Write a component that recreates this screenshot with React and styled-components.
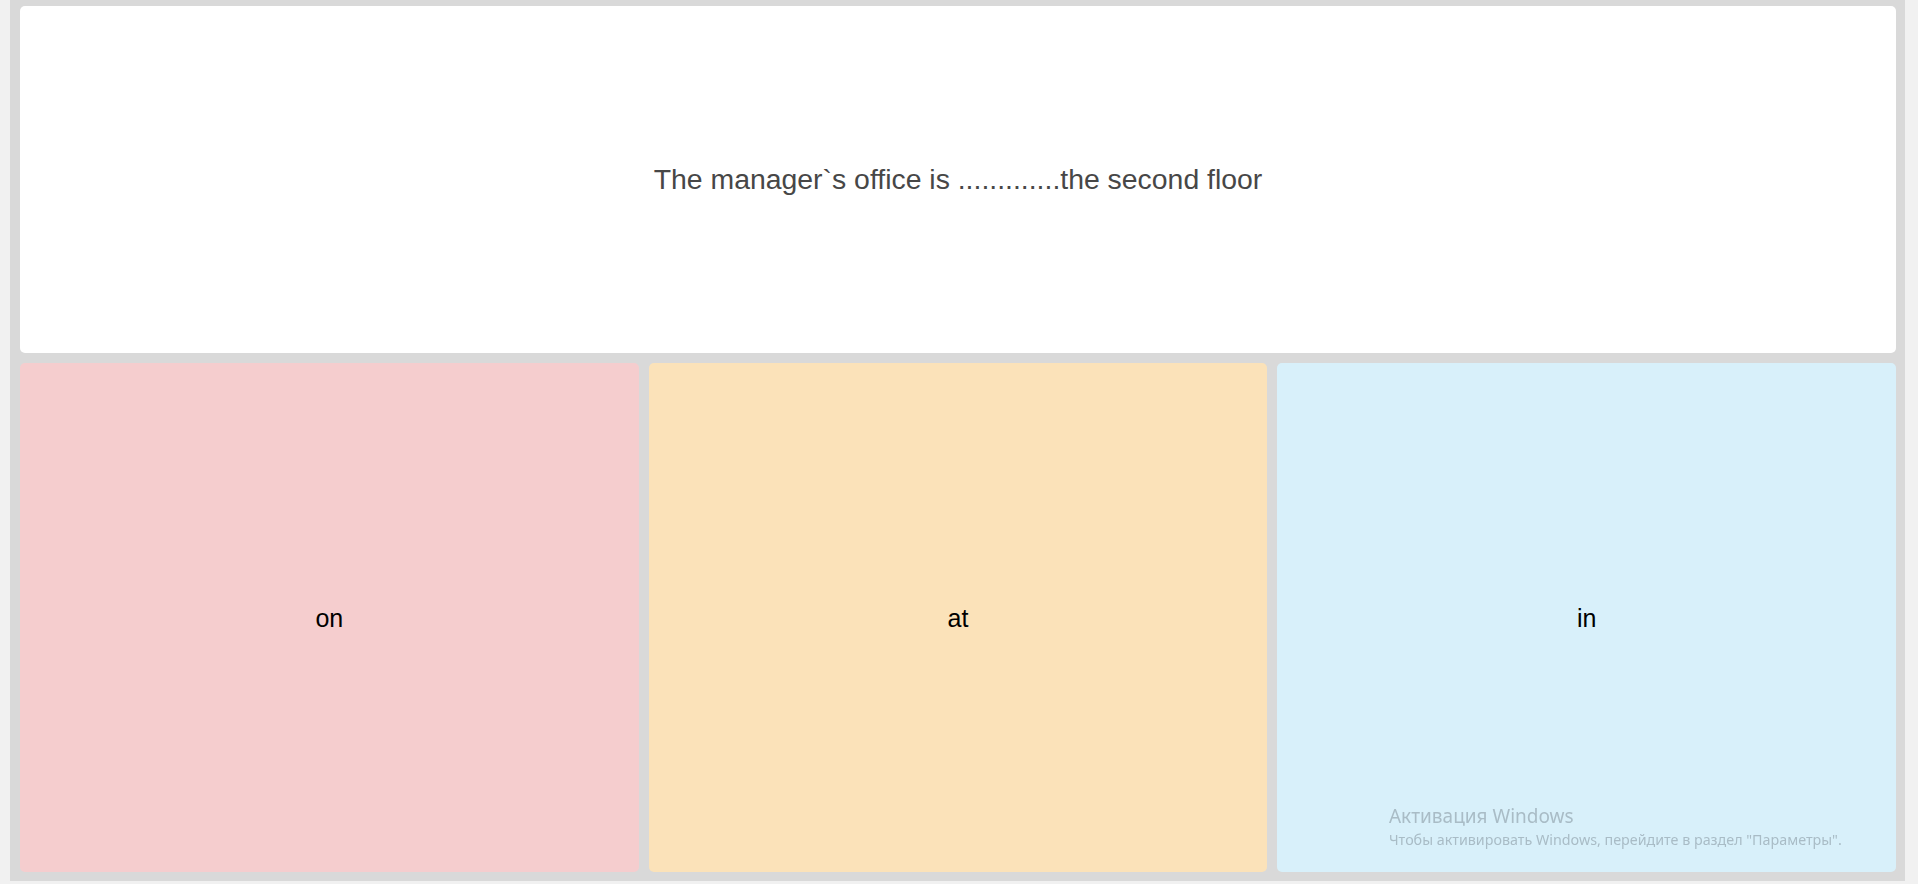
import React from 'react';
import styled, { createGlobalStyle } from 'styled-components';

const GlobalStyle = createGlobalStyle`
    html, body {
        margin: 0;
        padding: 0;
        background: #f1f1f1;
        overflow: hidden;
    }
    * {
        box-sizing: border-box;
    }
`;

const Frame = styled.div`
    margin-left: 10px;
    width: 1895px;
    height: 881px;
    padding: 6px 9px 9px 10px;
    background: #d9d9d9;
    display: grid;
    grid-template-rows: 347px 1fr;
    row-gap: 10px;
`;

const QuestionCard = styled.div`
    background: #ffffff;
    border-radius: 5px;
    display: flex;
    align-items: center;
    justify-content: center;
    font-family: "Liberation Sans", Arial, sans-serif;
    font-size: 28.4px;
    color: #474747;
`;

const Answers = styled.div`
    display: grid;
    grid-template-columns: repeat(3, 1fr);
    column-gap: 10px;
`;

const AnswerCard = styled.div`
    background: ${props => props.bg};
    border-radius: 5px;
    display: flex;
    align-items: center;
    justify-content: center;
    padding-top: 2px;
    font-family: "Liberation Sans", Arial, sans-serif;
    font-size: 25px;
    color: #000000;
    cursor: pointer;
`;

const Watermark = styled.div`
    position: fixed;
    left: 1389px;
    top: 803px;
    font-family: "Noto Sans", "Open Sans", sans-serif;
    color: #a9bcc6;
    pointer-events: none;

    .title {
        font-size: 19px;
        line-height: 26px;
    }
    .sub {
        font-size: 14.3px;
        line-height: 21px;
    }
`;

const answers = [
    { text: 'on', bg: '#f5cdce' },
    { text: 'at', bg: '#fbe2b9' },
    { text: 'in', bg: '#d8f0fa' },
];

const App = () => {
    return (
        <>
            <GlobalStyle />
            <Frame>
                <QuestionCard>The manager`s office is .............the second floor</QuestionCard>
                <Answers>
                    {answers.map(a => (
                        <AnswerCard key={a.text} bg={a.bg}>{a.text}</AnswerCard>
                    ))}
                </Answers>
            </Frame>
            <Watermark>
                <div className="title">Активация Windows</div>
                <div className="sub">Чтобы активировать Windows, перейдите в раздел "Параметры".</div>
            </Watermark>
        </>
    );
};

export default App;
